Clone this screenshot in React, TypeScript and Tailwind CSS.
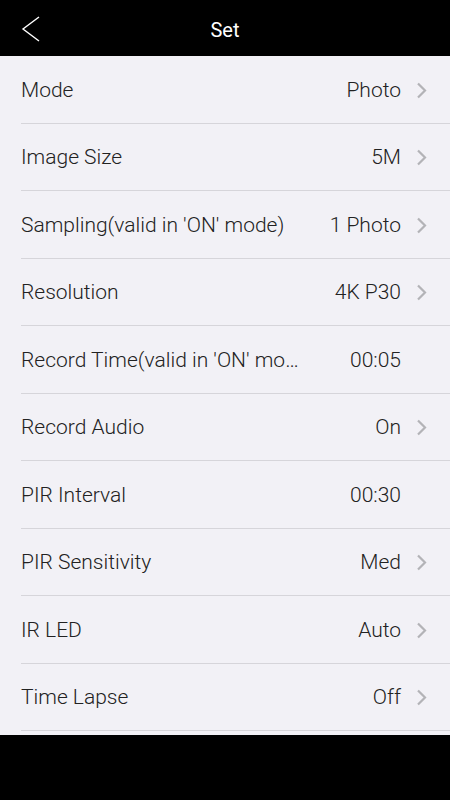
import { ReactNode } from 'react';

interface Setting {
  label: string;
  value: string;
  arrow: boolean;
}

const settings: Setting[] = [
  { label: 'Mode', value: 'Photo', arrow: true },
  { label: 'Image Size', value: '5M', arrow: true },
  { label: "Sampling(valid in 'ON' mode)", value: '1 Photo', arrow: true },
  { label: 'Resolution', value: '4K P30', arrow: true },
  { label: "Record Time(valid in 'ON' mode)", value: '00:05', arrow: false },
  { label: 'Record Audio', value: 'On', arrow: true },
  { label: 'PIR Interval', value: '00:30', arrow: false },
  { label: 'PIR Sensitivity', value: 'Med', arrow: true },
  { label: 'IR LED', value: 'Auto', arrow: true },
  { label: 'Time Lapse', value: 'Off', arrow: true },
];

function Chevron({ hidden }: { hidden: boolean }): ReactNode {
  return (
    <svg
      width="13"
      height="17"
      viewBox="0 0 13 17"
      className={hidden ? 'invisible' : ''}
      fill="none"
      stroke="#b3b3b7"
      strokeWidth="2.2"
    >
      <path d="M3 1.5 L10 8.5 L3 15.5" />
    </svg>
  );
}

export default function App() {
  return (
    <div className="w-[450px] h-[800px] bg-black flex flex-col font-['Roboto',sans-serif] overflow-hidden">
      {/* Top bar */}
      <header className="h-[56px] shrink-0 flex items-center justify-center relative text-white">
        <svg
          width="20"
          height="26"
          viewBox="0 0 20 26"
          className="absolute left-[21px] top-[16px]"
          fill="none"
          stroke="white"
          strokeWidth="1.4"
        >
          <path d="M18 1 L2 13 L18 25" />
        </svg>
        <span className="text-[20px] font-normal pt-[3px]">Set</span>
      </header>

      {/* Settings list */}
      <div className="h-[679px] shrink-0 bg-[#f2f1f6] overflow-hidden">
        {settings.map((s) => (
          <div key={s.label} className="h-[67.5px] pl-[21px] flex flex-col">
            <div className="flex-1 flex items-center pr-[22px] pt-[2px]">
              <span className="flex-1 min-w-0 truncate pr-[40px] text-[21px] font-light text-[#222222]">
                {s.label}
              </span>
              <span className="text-[21px] font-light text-[#222222] mr-[14px]">{s.value}</span>
              <Chevron hidden={!s.arrow} />
            </div>
            <div className="h-px bg-[#d6d5da]" />
          </div>
        ))}
      </div>
    </div>
  );
}
